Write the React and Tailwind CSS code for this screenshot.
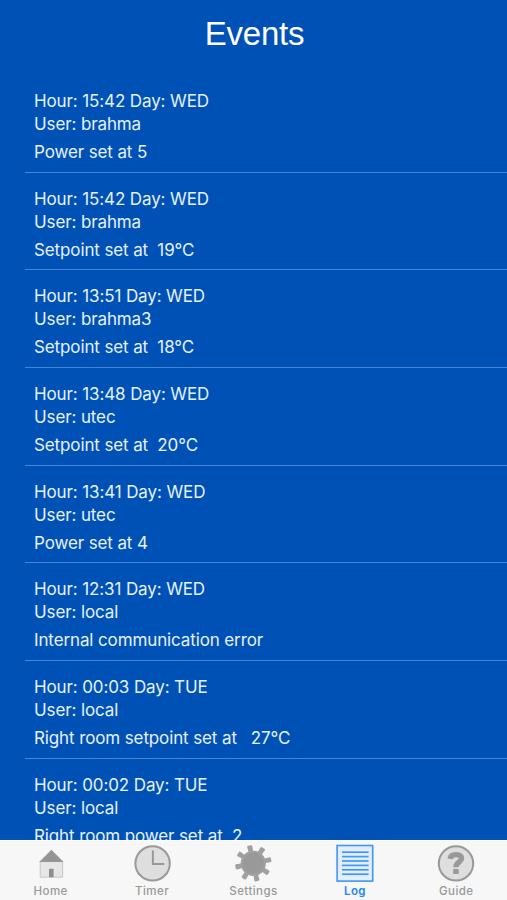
import React from 'react';

const events = [
  { hour: '15:42', day: 'WED', user: 'brahma', message: 'Power set at 5' },
  { hour: '15:42', day: 'WED', user: 'brahma', message: 'Setpoint set at  19°C' },
  { hour: '13:51', day: 'WED', user: 'brahma3', message: 'Setpoint set at  18°C' },
  { hour: '13:48', day: 'WED', user: 'utec', message: 'Setpoint set at  20°C' },
  { hour: '13:41', day: 'WED', user: 'utec', message: 'Power set at 4' },
  { hour: '12:31', day: 'WED', user: 'local', message: 'Internal communication error' },
  { hour: '00:03', day: 'TUE', user: 'local', message: 'Right room setpoint set at   27°C' },
  { hour: '00:02', day: 'TUE', user: 'local', message: 'Right room power set at  2' },
];

const teeth = [-12, 33, 78, 123, 168, 213, 258, 303];
const logLines = [8.2, 12.6, 17, 21.4, 25.8, 30.2];

function HomeIcon() {
  return (
    <svg className="size-[38px]" viewBox="0 0 38 38" fill="none">
      <path d="M8.2 17.5H30.6V33.2H8.2Z" fill="#e6e6e6" stroke="#c2c2c2" strokeWidth="0.9" />
      <path d="M19.4 5.8L31.6 18H7.2Z" fill="#959595" />
      <path d="M17 24.8H21.6V33.2H17Z" fill="#8e8e8e" />
    </svg>
  );
}

function TimerIcon() {
  return (
    <svg className="size-[38px]" viewBox="0 0 38 38" fill="none" stroke="#999999">
      <circle cx="19.6" cy="19.4" r="17.2" fill="#dedede" strokeWidth="2" />
      <path d="M19.9 6.5V19.9H31.3" strokeWidth="2" />
    </svg>
  );
}

function SettingsIcon() {
  return (
    <svg className="size-[38px]" viewBox="0 0 38 38" fill="#a0a0a0" stroke="#a0a0a0" strokeLinejoin="round">
      {teeth.map((angle) => (
        <path key={angle} d="M17.8 2.2H20.8L20.4 9H18.2Z" strokeWidth="2.2" transform={`rotate(${angle} 19.3 19.3)`} />
      ))}
      <circle cx="19.3" cy="19.3" r="12.6" stroke="none" />
      <circle cx="19.3" cy="19.3" r="10.5" fill="#999999" stroke="none" />
    </svg>
  );
}

function LogIcon() {
  return (
    <svg className="size-[38px]" viewBox="0 0 38 38" fill="none" stroke="#4197f4">
      <rect x="1.1" y="1.5" width="35.6" height="35.6" fill="#e2eefb" strokeWidth="1.6" />
      {logLines.map((y) => (
        <path key={y} d={`M6 ${y}H32.6`} strokeWidth="1.7" />
      ))}
    </svg>
  );
}

function GuideIcon() {
  return (
    <svg className="size-[38px]" viewBox="0 0 38 38" fill="none" stroke="#999999">
      <circle cx="19" cy="19.4" r="17.2" fill="#dedede" strokeWidth="2" />
      <path d="M13.1 14.8C13.6 11.6 15.8 10.6 18.9 10.6C22.4 10.6 24.5 12 24.5 14.6C24.5 18.2 18.9 18 18.9 23.2" strokeWidth="5.4" />
      <path d="M16.2 25H21.7V30H16.2Z" fill="#999999" stroke="none" />
    </svg>
  );
}

const tabs = [
  { label: 'Home', Icon: HomeIcon },
  { label: 'Timer', Icon: TimerIcon },
  { label: 'Settings', Icon: SettingsIcon },
  { label: 'Log', Icon: LogIcon, active: true },
  { label: 'Guide', Icon: GuideIcon },
];

function EventRow({ event }) {
  return (
    <li className="h-[97.7px] shrink-0 ml-[25px] pl-[9px] pt-[15px] border-b border-[#4a86cf] whitespace-pre text-[17px] leading-[23px] tracking-[-0.12px] text-[#e6f1ff]">
      <p>Hour: {event.hour} Day: {event.day}</p>
      <p>User: {event.user}</p>
      <p className="mt-[5px]">{event.message}</p>
    </li>
  );
}

export default function App() {
  return (
    <div className="flex h-[900px] w-[507px] flex-col overflow-hidden bg-[#0051b6] font-['Inter',sans-serif]">
      <header className="h-[75px] shrink-0 pt-[14px] text-center">
        <h1 className="pl-[2px] font-['Liberation_Sans',sans-serif] text-[33px] leading-[40px] tracking-[-0.2px] text-white">Events</h1>
      </header>

      <ul className="flex min-h-0 flex-1 flex-col overflow-hidden">
        {events.map((event, i) => (
          <EventRow key={i} event={event} />
        ))}
      </ul>

      <nav className="grid h-[60px] shrink-0 grid-cols-5 border-t border-white bg-[#f7f7f7]">
        {tabs.map(({ label, Icon, active }) => (
          <button key={label} className="flex flex-col items-center pt-[3px]">
            <Icon />
            <span
              className={
                active
                  ? 'mt-[2px] text-[11.5px] leading-[14px] font-semibold tracking-[0.3px] text-[#2388f8]'
                  : 'mt-[2px] text-[11.5px] leading-[14px] font-medium tracking-[0.45px] text-[#999999]'
              }
            >
              {label}
            </span>
          </button>
        ))}
      </nav>
    </div>
  );
}
